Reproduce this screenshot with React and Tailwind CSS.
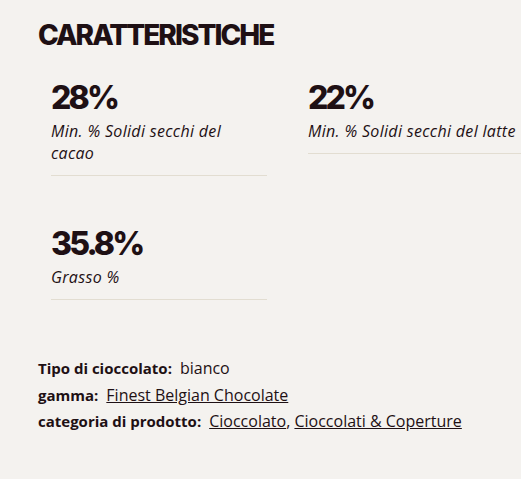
export default function App() {
    const stats = [
        { value: "28%", label: "Min. % Solidi secchi del cacao" },
        { value: "22%", label: "Min. % Solidi secchi del latte" },
        { value: "35.8%", label: "Grasso %" }
    ]

    return (
        <div className="min-h-screen w-full overflow-hidden bg-[#f4f2ef] text-[#1e1014] font-['Open_Sans',sans-serif]">
            <div className="pl-[38px] pt-[18px]">
                <h2 className="font-['Inter',sans-serif] text-[28px] leading-[34px] font-extrabold uppercase tracking-[-0.07em]">
                    Caratteristiche
                </h2>

                {/* Valori */}
                <div className="mt-[26px] ml-[13px] grid grid-cols-[216px_216px] gap-x-[41px] gap-y-[48px] items-start">
                    {stats.map(s => (
                        <div key={s.value} className="border-b border-[#e2ddd1] pb-[11px]">
                            <div className="font-['Inter',sans-serif] text-[32px] leading-[40px] font-extrabold tracking-[-0.09em]">
                                {s.value}
                            </div>
                            <div className="mt-[2px] text-base leading-[22px] italic tracking-[0.02em]">
                                {s.label}
                            </div>
                        </div>
                    ))}
                </div>

                {/* Dettagli */}
                <div className="mt-[55px] text-base leading-[26.5px]">
                    <div>
                        <span className="font-bold text-[15px] mr-2">Tipo di cioccolato:</span>
                        <span>bianco</span>
                    </div>
                    <div>
                        <span className="font-bold text-[15px] mr-2">gamma:</span>
                        <a href="#" className="underline">Finest Belgian Chocolate</a>
                    </div>
                    <div>
                        <span className="font-bold text-[15px] mr-2">categoria di prodotto:</span>
                        <a href="#" className="underline">Cioccolato</a>,{" "}
                        <a href="#" className="underline">Cioccolati &amp; Coperture</a>
                    </div>
                </div>
            </div>
        </div>
    )
}
